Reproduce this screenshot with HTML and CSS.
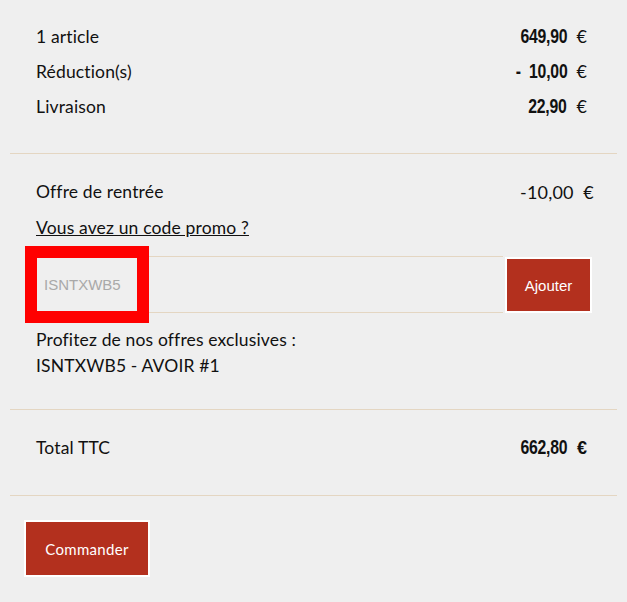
FILE: index.html
```html
<!DOCTYPE html>
<html lang="fr">
<head>
<meta charset="utf-8">
<link rel="stylesheet" href="styles.css">
</head>
<body>
<div class="summary">
  <section class="block block-lines">
    <div class="row"><span class="label">1 article</span><span class="amount"><b>649,90</b> €</span></div>
    <div class="row"><span class="label">Réduction(s)</span><span class="amount"><b>-&nbsp;&nbsp;10,00</b> €</span></div>
    <div class="row"><span class="label">Livraison</span><span class="amount"><b>22,90</b> €</span></div>
  </section>
  <section class="block block-promo">
    <div class="row offer"><span class="label">Offre de rentrée</span><span class="offer-val">-10,00&nbsp; €</span></div>
    <a class="promo-link" href="#">Vous avez un code promo ?</a>
    <div class="promo-form">
      <input class="promo-input" type="text" placeholder="ISNTXWB5">
      <button class="btn btn-add" type="button">Ajouter</button>
      <div class="highlight"></div>
    </div>
    <p class="offers">Profitez de nos offres exclusives :<br>ISNTXWB5 - AVOIR #1</p>
  </section>
  <section class="block block-total">
    <div class="row"><span class="label">Total TTC</span><span class="amount"><b>662,80</b> <b class="euro">€</b></span></div>
  </section>
  <section class="block-order">
    <button class="btn btn-order" type="button">Commander</button>
  </section>
</div>
</body>
</html>
```
FILE: styles.css
```css
html, body {
  margin: 0;
  padding: 0;
  background: #efefef;
}
body {
  font-family: "Lato", "Liberation Sans", sans-serif;
  font-size: 17.5px;
  letter-spacing: 0.15px;
  color: #111;
}
.summary {
  padding: 0 10px;
}
.block {
  border-bottom: 1px solid #e4d6c2;
}
.block-lines {
  padding: 19px 30px 29px 26px;
}
.row {
  display: flex;
  justify-content: space-between;
  align-items: center;
  height: 35px;
}
.amount {
  font-size: 18px;
  letter-spacing: 0;
}
.amount b {
  display: inline-block;
  margin-right: 5px;
  font-family: "Liberation Sans", Arial, sans-serif;
  font-weight: 700;
  font-size: 20px;
  letter-spacing: -0.3px;
  transform: scaleX(0.79);
  transform-origin: right center;
}
.amount b.euro {
  margin-right: 0;
  font-size: 18px;
  transform: none;
  letter-spacing: 0;
}
.block-promo {
  padding: 20px 23px 30px 26px;
}
.offer-val {
  font-size: 18px;
  letter-spacing: 0.2px;
}
.promo-link {
  display: inline-block;
  margin-top: 8px;
  color: #111;
  text-decoration: underline;
  line-height: 22px;
}
.promo-form {
  position: relative;
  display: flex;
  gap: 2px;
  margin-top: 17px;
  margin-right: 2px;
}
.promo-input {
  flex: 1;
  height: 57px;
  box-sizing: border-box;
  border: 0;
  border-top: 1px solid #e4d6c2;
  border-bottom: 1px solid #e4d6c2;
  background: #efefef;
  padding: 0 8px;
  font-family: "Liberation Sans", Arial, sans-serif;
  font-size: 15px;
  letter-spacing: 0;
  outline: none;
}
.promo-input::placeholder {
  color: #a9a9a9;
}
.btn {
  background: #b3301e;
  color: #fff;
  border: 2px solid #fff;
  font-family: "Lato", "Liberation Sans", sans-serif;
  cursor: pointer;
}
.btn-add {
  width: 87px;
  height: 56px;
  font-family: "Liberation Sans", Arial, sans-serif;
  font-size: 15px;
  letter-spacing: 0;
  margin-top: 1px;
}
.highlight {
  position: absolute;
  left: -11px;
  top: -10px;
  width: 124px;
  height: 77px;
  box-sizing: border-box;
  border: 12px solid #ff0000;
  pointer-events: none;
}
.offers {
  margin: 14px 0 0;
  line-height: 26px;
}
.block-total {
  padding: 20px 30px 30px 26px;
}
.block-order {
  padding: 24px 0 0 14px;
}
.btn-order {
  width: 126px;
  height: 57px;
  font-size: 15px;
  letter-spacing: 0.3px;
}
```
